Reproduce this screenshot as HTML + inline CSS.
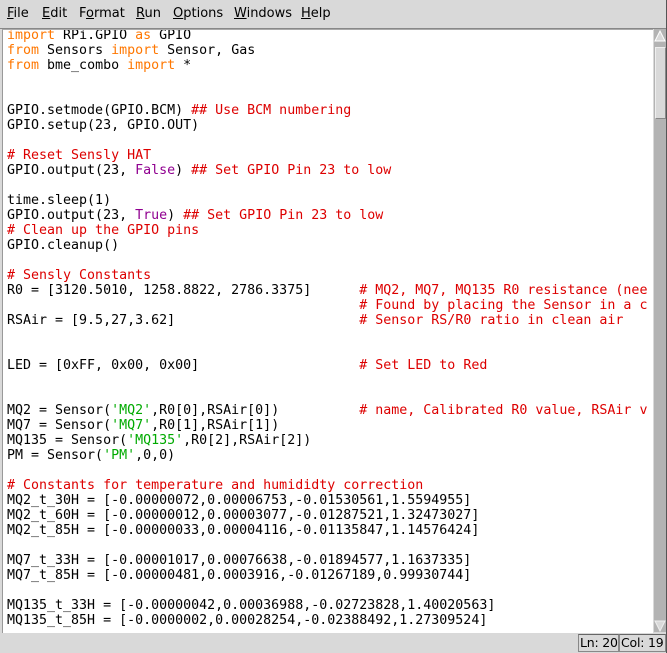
<!DOCTYPE html>
<html><head><style>
html,body{margin:0;width:667px;height:653px;overflow:hidden}
body{background:#d9d9d9;position:relative;font-family:"DejaVu Sans","Liberation Sans",sans-serif}
#menu{position:absolute;left:0;top:0;width:666px;height:28px;background:#d9d9d9;border-bottom:1px solid #888;font-size:13px;color:#000}
#menu span{position:absolute;top:6px}
#menu u{text-decoration:underline}
#rb{position:absolute;right:0;top:0;width:1px;height:653px;background:#555}
#ed{position:absolute;left:2px;top:29px;width:650px;height:603px;background:#fff;border-left:1px solid #999;border-top:1px solid #aaa;overflow:hidden}
pre{margin:0;position:absolute;left:4px;top:-2px;font-family:"DejaVu Sans Mono","Liberation Mono",monospace;font-size:13.3px;line-height:15px;color:#000;white-space:pre}
.k{color:#ff7700}.c{color:#dd0000}.s{color:#00aa00}.b{color:#900090}
#sb{position:absolute;left:654px;top:29px;width:12px;height:603px;background:#b3b3b3}
#th{position:absolute;left:655px;top:47px;width:9px;height:70px;background:#d9d9d9;border:1px solid #eee;border-right-color:#888;border-bottom-color:#888}
#st{position:absolute;left:0;top:633px;width:666px;height:20px;background:#d9d9d9;font-size:12.5px;overflow:hidden}
.bx{position:absolute;top:1px;height:18px;box-sizing:border-box;border:1px solid #888;border-top-color:#666;line-height:16px;padding-left:1px;white-space:nowrap;overflow:hidden;letter-spacing:-0.2px}
</style></head><body>
<div id="menu">
<span style="left:7px"><u>F</u>ile</span>
<span style="left:42px"><u>E</u>dit</span>
<span style="left:79px">F<u>o</u>rmat</span>
<span style="left:136px"><u>R</u>un</span>
<span style="left:173px"><u>O</u>ptions</span>
<span style="left:234px"><u>W</u>indows</span>
<span style="left:301px"><u>H</u>elp</span>
</div>
<div id="ed"><pre><span class="k">import</span> RPi.GPIO <span class="k">as</span> GPIO
<span class="k">from</span> Sensors <span class="k">import</span> Sensor, Gas
<span class="k">from</span> bme_combo <span class="k">import</span> *


GPIO.setmode(GPIO.BCM) <span class="c">## Use BCM numbering</span>
GPIO.setup(23, GPIO.OUT)

<span class="c"># Reset Sensly HAT</span>
GPIO.output(23, <span class="b">False</span>) <span class="c">## Set GPIO Pin 23 to low</span>

time.sleep(1)
GPIO.output(23, <span class="b">True</span>) <span class="c">## Set GPIO Pin 23 to low</span>
<span class="c"># Clean up the GPIO pins</span>
GPIO.cleanup()

<span class="c"># Sensly Constants</span>
R0 = [3120.5010, 1258.8822, 2786.3375]      <span class="c"># MQ2, MQ7, MQ135 R0 resistance (nee</span>
                                            <span class="c"># Found by placing the Sensor in a c</span>
RSAir = [9.5,27,3.62]                       <span class="c"># Sensor RS/R0 ratio in clean air</span>


LED = [0xFF, 0x00, 0x00]                    <span class="c"># Set LED to Red</span>


MQ2 = Sensor(<span class="s">'MQ2'</span>,R0[0],RSAir[0])          <span class="c"># name, Calibrated R0 value, RSAir v</span>
MQ7 = Sensor(<span class="s">'MQ7'</span>,R0[1],RSAir[1])
MQ135 = Sensor(<span class="s">'MQ135'</span>,R0[2],RSAir[2])
PM = Sensor(<span class="s">'PM'</span>,0,0)

<span class="c"># Constants for temperature and humididty correction</span>
MQ2_t_30H = [-0.00000072,0.00006753,-0.01530561,1.5594955]
MQ2_t_60H = [-0.00000012,0.00003077,-0.01287521,1.32473027]
MQ2_t_85H = [-0.00000033,0.00004116,-0.01135847,1.14576424]

MQ7_t_33H = [-0.00001017,0.00076638,-0.01894577,1.1637335]
MQ7_t_85H = [-0.00000481,0.0003916,-0.01267189,0.99930744]

MQ135_t_33H = [-0.00000042,0.00036988,-0.02723828,1.40020563]
MQ135_t_85H = [-0.0000002,0.00028254,-0.02388492,1.27309524]
</pre></div>
<div id="sb"></div>
<svg style="position:absolute;left:654px;top:30px" width="12" height="12"><polygon points="6,1 11,11 1,11" fill="#d9d9d9" stroke="#fff"/></svg>
<div id="th"></div>
<svg style="position:absolute;left:654px;top:620px" width="12" height="12"><polygon points="1,1 11,1 6,11" fill="#d9d9d9" stroke="#eee"/></svg>
<div id="st">
<div class="bx" style="left:578px;width:41px">Ln: 20</div>
<div class="bx" style="left:619px;width:47px">Col: 19</div>
</div>
<div id="rb"></div>
</body></html>
